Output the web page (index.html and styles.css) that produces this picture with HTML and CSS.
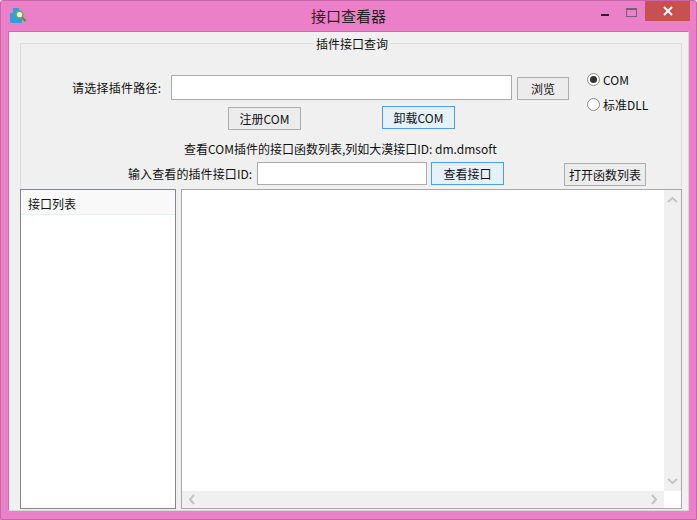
FILE: index.html
```html
<!DOCTYPE html>
<html lang="zh-CN">
<head>
    <meta charset="UTF-8">
    <title>接口查看器</title>
    <link rel="stylesheet" href="styles.css">
</head>
<body>
    <div class="window">
        <!-- Title bar -->
        <div class="titlebar">
            <svg class="app-icon" width="16" height="16" viewBox="0 0 16 16">
                <rect x="3" y="0" width="6" height="5" fill="#2f9fe0"/>
                <rect x="0" y="5" width="10" height="10" fill="#2f9fe0"/>
                <rect x="9" y="11" width="3" height="4" fill="#2f9fe0"/>
                <circle cx="9.5" cy="6.5" r="3.4" fill="#fff" stroke="#58b947" stroke-width="1.6"/>
                <path d="M12 9.5 L15.5 13" stroke="#3f9a35" stroke-width="2"/>
            </svg>
            <div class="title">接口查看器</div>
            <div class="win-btns">
                <div class="win-min"></div>
                <div class="win-max"></div>
                <div class="win-close">
                    <svg width="10" height="10" viewBox="0 0 10 10"><path d="M1 1 L9 9 M9 1 L1 9" stroke="#fff" stroke-width="2"/></svg>
                </div>
            </div>
        </div>

        <div class="client">
            <!-- Plugin group -->
            <div class="group">
                <div class="group-title"><span>插件接口查询</span></div>
                <div class="top">
                    <div class="top-left">
                        <div class="path-row">
                            <label class="path-label">请选择插件路径:</label>
                            <div class="input path-input"></div>
                            <button class="btn browse-btn">浏览</button>
                        </div>
                        <div class="com-row">
                            <button class="btn reg-btn">注册COM</button>
                            <button class="btn btn-blue unreg-btn">卸载COM</button>
                        </div>
                    </div>
                    <div class="radios">
                        <div class="radio-item"><span class="radio checked"></span>COM</div>
                        <div class="radio-item"><span class="radio"></span>标准DLL</div>
                    </div>
                </div>
                <div class="hint">查看COM插件的接口函数列表,列如大漠接口ID: dm.dmsoft</div>
                <div class="id-row">
                    <label class="id-label">输入查看的插件接口ID:</label>
                    <div class="input id-input"></div>
                    <button class="btn btn-blue view-btn">查看接口</button>
                    <button class="btn open-btn">打开函数列表</button>
                </div>
            </div>

            <!-- Panels -->
            <div class="panels">
                <div class="list-panel">
                    <div class="list-head">接口列表</div>
                </div>
                <div class="text-panel">
                    <div class="text-main">
                        <div class="text-area"></div>
                        <div class="vscroll">
                            <svg width="11" height="7" viewBox="0 0 11 7"><path d="M1 6 L5.5 2 L10 6" fill="none" stroke="#c4c4c4" stroke-width="2"/></svg>
                            <svg width="11" height="7" viewBox="0 0 11 7"><path d="M1 1 L5.5 5 L10 1" fill="none" stroke="#c4c4c4" stroke-width="2"/></svg>
                        </div>
                    </div>
                    <div class="hscroll">
                        <svg width="7" height="11" viewBox="0 0 7 11"><path d="M6 1 L2 5.5 L6 10" fill="none" stroke="#c4c4c4" stroke-width="2"/></svg>
                        <svg width="7" height="11" viewBox="0 0 7 11"><path d="M1 1 L5 5.5 L1 10" fill="none" stroke="#c4c4c4" stroke-width="2"/></svg>
                    </div>
                </div>
            </div>
        </div>
    </div>
</body>
</html>
```

FILE: styles.css
```css
html, body {
    margin: 0;
    padding: 0;
}
body {
    font-family: "Noto Sans CJK SC", "Liberation Sans", sans-serif;
    font-size: 12px;
    color: #111;
}
.window {
    width: 697px;
    height: 520px;
    box-sizing: border-box;
    background-color: #ec80c8;
    border: 1px solid #c867a8;
    border-radius: 3px 3px 0 0;
    display: flex;
    flex-direction: column;
}
.titlebar {
    height: 30px;
    display: flex;
    position: relative;
    flex-shrink: 0;
}
.app-icon {
    margin: 7px 0 0 9px;
}
.title {
    position: absolute;
    left: 310px;
    top: 5px;
    font-size: 15px;
    line-height: 20px;
    color: #222;
}
.win-btns {
    margin-left: auto;
    margin-right: 6px;
    display: flex;
    align-items: flex-start;
}
.win-min {
    width: 8px;
    height: 2px;
    background-color: #222;
    margin: 13px 17px 0 0;
}
.win-max {
    width: 9px;
    height: 6px;
    border: 1px solid #7a5a78;
    border-top-width: 2px;
    margin: 7px 8px 0 0;
}
.win-close {
    width: 45px;
    height: 20px;
    background-color: #c75050;
    display: flex;
    align-items: center;
    justify-content: center;
}
.client {
    flex: 1;
    margin: 0 7px 8px 7px;
    background-color: #f0f0f0;
    border: 1px solid #c568a5;
    border-color: #c96ca9 #d8d8d8 #d8d8d8 #c96ca9;
    padding: 11px 6px 1px 11px;
    display: flex;
    flex-direction: column;
}
.group {
    border: 1px solid #dcdcdc;
    border-bottom: none;
    height: 146px;
    box-sizing: border-box;
    flex-shrink: 0;
}
.group-title {
    text-align: center;
    height: 0;
    line-height: 16px;
    margin-left: 2px;
}
.group-title span {
    position: relative;
    top: -8px;
    background-color: #f0f0f0;
    padding: 0 2px;
}
.top {
    display: flex;
    padding-top: 31px;
}
.top-left {
    width: 549px;
}
.path-row {
    display: flex;
    align-items: center;
    height: 25px;
}
.path-label {
    margin-left: 51px;
    width: 99px;
    letter-spacing: 0.25px;
}
.input {
    background-color: #fff;
    border: 1px solid #ababab;
    box-sizing: border-box;
}
.path-input {
    width: 341px;
    height: 25px;
}
.btn {
    font-family: inherit;
    font-size: 12px;
    color: #111;
    padding: 0;
    background-color: #ececec;
    border: 1px solid #adadad;
    box-sizing: border-box;
    height: 23px;
}
.btn-blue {
    background-color: #e5f1fb;
    border-color: #4a9fe8;
}
.browse-btn {
    width: 52px;
    margin-left: 5px;
    margin-top: 1px;
}
.com-row {
    display: flex;
    align-items: flex-start;
    margin-top: 6px;
}
.reg-btn {
    width: 73px;
    margin: 1px 0 0 207px;
}
.unreg-btn {
    width: 73px;
    margin-left: 81px;
}
.radios {
    margin: -8px 0 0 17px;
}
.radio-item {
    display: flex;
    align-items: center;
    height: 25px;
}
.radio {
    width: 13px;
    height: 13px;
    border: 1px solid #8a8a8a;
    border-radius: 50%;
    background-color: #fff;
    box-sizing: border-box;
    margin-right: 3px;
    display: flex;
    align-items: center;
    justify-content: center;
}
.radio.checked::after {
    content: "";
    width: 7px;
    height: 7px;
    border-radius: 50%;
    background-color: #333;
}
.hint {
    margin: 9px 0 0 163px;
    height: 20px;
    line-height: 20px;
    white-space: nowrap;
}
.id-row {
    display: flex;
    align-items: flex-start;
    margin-top: 3px;
}
.id-label {
    margin-left: 107px;
    width: 129px;
    line-height: 23px;
    white-space: nowrap;
    letter-spacing: 0.1px;
}
.id-input {
    width: 170px;
    height: 23px;
}
.view-btn {
    width: 73px;
    margin-left: 4px;
}
.open-btn {
    width: 82px;
    margin: 1px 0 0 60px;
}
.panels {
    flex: 1;
    display: flex;
    gap: 5px;
}
.list-panel {
    width: 156px;
    box-sizing: border-box;
    border: 1px solid #828790;
    background-color: #fff;
}
.list-head {
    height: 24px;
    line-height: 27px;
    padding-left: 7px;
    background-color: #f9f9f9;
    border-bottom: 1px solid #e8eef4;
}
.text-panel {
    flex: 1;
    box-sizing: border-box;
    border: 1px solid #a8a8a8;
    background-color: #fff;
    display: flex;
    flex-direction: column;
}
.text-main {
    flex: 1;
    display: flex;
}
.text-area {
    flex: 1;
}
.vscroll {
    width: 17px;
    background-color: #f0f0f0;
    display: flex;
    flex-direction: column;
    justify-content: space-between;
    align-items: center;
    padding: 6px 0;
    box-sizing: border-box;
}
.hscroll {
    height: 17px;
    margin-right: 17px;
    background-color: #f0f0f0;
    display: flex;
    justify-content: space-between;
    align-items: center;
    padding: 0 6px;
}
```
